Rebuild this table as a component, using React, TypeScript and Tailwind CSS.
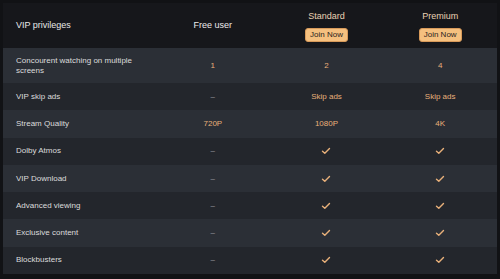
import { ReactNode } from "react";

type Cell = string | boolean | null;

const rows: { label: string; cells: [Cell, Cell, Cell] }[] = [
  { label: "Concourent watching on multiple screens", cells: ["1", "2", "4"] },
  { label: "VIP skip ads", cells: [null, "Skip ads", "Skip ads"] },
  { label: "Stream Quality", cells: ["720P", "1080P", "4K"] },
  { label: "Dolby Atmos", cells: [null, true, true] },
  { label: "VIP Download", cells: [null, true, true] },
  { label: "Advanced viewing", cells: [null, true, true] },
  { label: "Exclusive content", cells: [null, true, true] },
  { label: "Blockbusters", cells: [null, true, true] },
];

function Check() {
  return (
    <svg width="10" height="8" viewBox="0 0 10 8" fill="none">
      <path d="M1.5 4.2 L3.8 6.3 L8.5 1.5" stroke="#e8b07a" strokeWidth="1.4" strokeLinecap="round" strokeLinejoin="round" />
    </svg>
  );
}

function renderCell(c: Cell): ReactNode {
  if (c === null) return <span className="text-[#9a9ca1]">–</span>;
  if (c === true) return <Check />;
  return <span className="text-[#e8b07a]">{c}</span>;
}

function PlanHead({ name }: { name: string }) {
  return (
    <div className="flex flex-col items-center gap-[4px] pt-[1px]">
      <span className="text-[9px] text-[#ead2b3]">{name}</span>
      <button className="h-[14px] px-[4px] rounded-[3px] bg-[#f5c07f] border border-[#d89a5a] text-[8px] leading-none text-[#2a2320]">
        Join Now
      </button>
    </div>
  );
}

export default function App() {
  return (
    <div className="w-[500px] h-[279px] bg-[#111215] p-[3px] font-['Liberation_Sans',Arial,sans-serif]">
      <div className="w-[494px]">
        <div className="grid grid-cols-[153px_1fr_1fr_1fr] h-[45px] bg-[#16171b] items-center">
          <span className="pl-[13px] text-[9px] text-[#e8e8e8]">VIP privileges</span>
          <span className="text-center text-[9px] text-[#ececec]">Free user</span>
          <PlanHead name="Standard" />
          <PlanHead name="Premium" />
        </div>
        {rows.map((r, i) => (
          <div
            key={r.label}
            className={`grid grid-cols-[153px_1fr_1fr_1fr] items-center text-[8px] ${
              i === 0 ? "h-[35px]" : "h-[27.3px]"
            } ${i % 2 === 0 ? "bg-[#2b2f36]" : "bg-[#23262c]"}`}
          >
            <span className="pl-[13px] pr-[20px] leading-[10px] text-[#dcdcdc]">{r.label}</span>
            {r.cells.map((c, j) => (
              <div key={j} className="flex justify-center items-center">
                {renderCell(c)}
              </div>
            ))}
          </div>
        ))}
      </div>
    </div>
  );
}
